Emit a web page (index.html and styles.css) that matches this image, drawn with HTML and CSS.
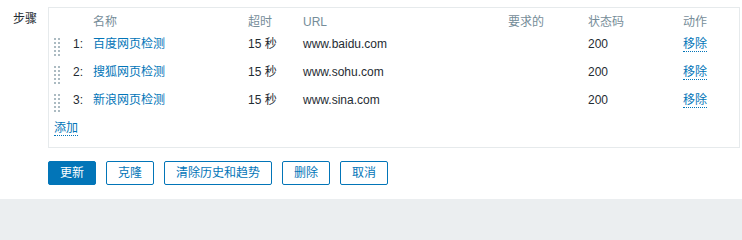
FILE: index.html
```html
<!DOCTYPE html>
<html lang="zh-CN">
<head>
<meta charset="utf-8">
<title>步骤</title>
<link rel="stylesheet" href="styles.css">
</head>
<body>
<div class="page">
  <div class="form-row">
    <div class="label">步骤</div>
    <div class="steps-box">
      <div class="steps-row steps-head">
        <span></span>
        <span></span>
        <span>名称</span>
        <span>超时</span>
        <span>URL</span>
        <span>要求的</span>
        <span>状态码</span>
        <span>动作</span>
      </div>
      <div class="steps-row">
        <span class="handle"><svg width="6" height="18" viewBox="0 0 6 18"><g fill="#acbbc2"><rect x="0" y="0" width="2" height="2"/><rect x="4" y="0" width="2" height="2"/><rect x="0" y="4" width="2" height="2"/><rect x="4" y="4" width="2" height="2"/><rect x="0" y="8" width="2" height="2"/><rect x="4" y="8" width="2" height="2"/><rect x="0" y="12" width="2" height="2"/><rect x="4" y="12" width="2" height="2"/><rect x="0" y="16" width="2" height="2"/><rect x="4" y="16" width="2" height="2"/></g></svg></span>
        <span class="num">1:</span>
        <span><a class="name-link">百度网页检测</a></span>
        <span>15 秒</span>
        <span>www.baidu.com</span>
        <span></span>
        <span>200</span>
        <span><a class="dotted-link">移除</a></span>
      </div>
      <div class="steps-row">
        <span class="handle"><svg width="6" height="18" viewBox="0 0 6 18"><g fill="#acbbc2"><rect x="0" y="0" width="2" height="2"/><rect x="4" y="0" width="2" height="2"/><rect x="0" y="4" width="2" height="2"/><rect x="4" y="4" width="2" height="2"/><rect x="0" y="8" width="2" height="2"/><rect x="4" y="8" width="2" height="2"/><rect x="0" y="12" width="2" height="2"/><rect x="4" y="12" width="2" height="2"/><rect x="0" y="16" width="2" height="2"/><rect x="4" y="16" width="2" height="2"/></g></svg></span>
        <span class="num">2:</span>
        <span><a class="name-link">搜狐网页检测</a></span>
        <span>15 秒</span>
        <span>www.sohu.com</span>
        <span></span>
        <span>200</span>
        <span><a class="dotted-link">移除</a></span>
      </div>
      <div class="steps-row">
        <span class="handle"><svg width="6" height="18" viewBox="0 0 6 18"><g fill="#acbbc2"><rect x="0" y="0" width="2" height="2"/><rect x="4" y="0" width="2" height="2"/><rect x="0" y="4" width="2" height="2"/><rect x="4" y="4" width="2" height="2"/><rect x="0" y="8" width="2" height="2"/><rect x="4" y="8" width="2" height="2"/><rect x="0" y="12" width="2" height="2"/><rect x="4" y="12" width="2" height="2"/><rect x="0" y="16" width="2" height="2"/><rect x="4" y="16" width="2" height="2"/></g></svg></span>
        <span class="num">3:</span>
        <span><a class="name-link">新浪网页检测</a></span>
        <span>15 秒</span>
        <span>www.sina.com</span>
        <span></span>
        <span>200</span>
        <span><a class="dotted-link">移除</a></span>
      </div>
      <div class="add-row"><a class="dotted-link">添加</a></div>
    </div>
  </div>
  <div class="buttons">
    <button class="btn btn-primary">更新</button>
    <button class="btn">克隆</button>
    <button class="btn">清除历史和趋势</button>
    <button class="btn">删除</button>
    <button class="btn">取消</button>
  </div>
</div>
</body>
</html>
```

FILE: styles.css
```css
html {
  background: #ebeef0;
}

html, body {
  margin: 0;
  padding: 0;
}

body {
  font-family: "Liberation Sans", Arial, "Noto Sans CJK SC", sans-serif;
  font-size: 12px;
  line-height: 14px;
  color: #1f2c33;
}

.page {
  height: 192px;
  padding-top: 7px;
  background: #ffffff;
}

.form-row {
  display: flex;
  align-items: flex-start;
}

.label {
  width: 37px;
  padding-right: 11px;
  padding-top: 5px;
  text-align: right;
  flex: none;
}

.steps-box {
  flex: 1;
  margin-right: 2px;
  border: 1px solid #e6eaec;
  padding: 3px 5px 12px 5px;
}

.steps-row {
  display: grid;
  grid-template-columns: 10px 29px 155px 55px 205px 80px 95px 1fr;
  height: 28px;
  padding-top: 4px;
  box-sizing: border-box;
  align-items: start;
}

.steps-head {
  height: 22px;
  color: #768d99;
}

.handle {
  display: block;
  height: 18px;
  margin-top: 1px;
}

.handle svg {
  display: block;
}

.num {
  text-align: right;
  padding-right: 10px;
}

.name-link {
  color: #0275b8;
  text-decoration: none;
}

.dotted-link {
  color: #0275b8;
  text-decoration: none;
  border-bottom: 1px dotted #0275b8;
}

.add-row {
  margin-top: 4px;
  height: 14px;
}

.buttons {
  display: flex;
  gap: 10px;
  margin-top: 13px;
  padding-left: 48px;
}

.btn {
  font-family: "Liberation Sans", Arial, "Noto Sans CJK SC", sans-serif;
  font-size: 12px;
  line-height: 14px;
  height: 24px;
  padding: 0 11px;
  border: 1px solid #0275b8;
  border-radius: 2px;
  background: #ffffff;
  color: #0275b8;
}

.btn-primary {
  background: #0275b8;
  color: #ffffff;
}
```
